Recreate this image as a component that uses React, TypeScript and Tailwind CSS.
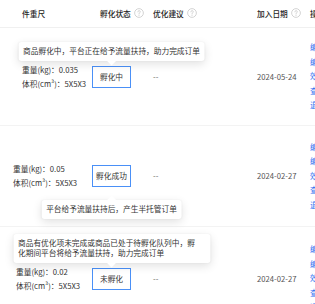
import React from 'react';

interface ProductRow {
  weight: string;
  volume: string;
  status: string;
  date: string;
  indent: string;
  height: string;
  tip: string;
  tipSide: 'top' | 'bottom';
  tipClass: string;
}

const rows: ProductRow[] = [
  {
    weight: '0.035',
    volume: '5X5X3',
    status: '孵化中',
    date: '2024-05-24',
    indent: 'pl-[22px]',
    height: 'h-[98px]',
    tip: '商品孵化中，平台正在给予流量扶持，助力完成订单',
    tipSide: 'top',
    tipClass: 'whitespace-nowrap',
  },
  {
    weight: '0.05',
    volume: '5X5X3',
    status: '孵化成功',
    date: '2024-02-27',
    indent: 'pl-[13px]',
    height: 'h-[101px]',
    tip: '平台给予流量扶持后，产生半托管订单',
    tipSide: 'bottom',
    tipClass: 'whitespace-nowrap',
  },
  {
    weight: '0.02',
    volume: '5X5X3',
    status: '未孵化',
    date: '2024-02-27',
    indent: 'pl-[16px]',
    height: 'h-[104px]',
    tip: '商品有优化项未完成或商品已处于待孵化队列中，孵化期间平台将给予流量扶持，助力完成订单',
    tipSide: 'top',
    tipClass: 'w-[197px] pr-[14px]',
  },
];

const actions = ['编辑商品', '编辑价格', '效果数据', '查看详情', '退出孵化'];

const HelpIcon = () => (
  <svg width="10" height="10" viewBox="0 0 16 16" className="ml-[3px] shrink-0">
    <circle cx="8" cy="8" r="7" fill="none" stroke="#c4c4c4" strokeWidth="1.2" />
    <path d="M6.2 6.2a1.9 1.9 0 1 1 2.6 1.7c-.5.3-.8.6-.8 1.2v.4" fill="none" stroke="#c4c4c4" strokeWidth="1.2" strokeLinecap="round" />
    <circle cx="8" cy="11.6" r="0.8" fill="#c4c4c4" />
  </svg>
);

const StatusTip: React.FC<{ row: ProductRow }> = ({ row }) => {
  const top = row.tipSide === 'top';
  return (
    <div
      className={`absolute left-1/2 -translate-x-1/2 z-10 ${top ? 'bottom-[calc(100%+6px)]' : 'top-[calc(100%+14px)]'}`}
    >
      <div
        className={`relative bg-white rounded-[3px] pl-[5px] pr-[5px] py-[4px] text-[7.7px] leading-[10.5px] text-[#333] shadow-[0_3px_10px_rgba(0,0,0,0.12),0_0_2px_rgba(0,0,0,0.06)] ${row.tipClass}`}
      >
        {row.tip}
        <span
          className={`absolute left-1/2 -translate-x-1/2 w-[7px] h-[7px] bg-white rotate-45 ${top ? '-bottom-[3px]' : '-top-[3px]'}`}
        />
      </div>
    </div>
  );
};

export default function App() {
  return (
    <div
      className="w-[315px] h-[304px] overflow-hidden bg-white text-[#333]"
      style={{ fontFamily: '"Noto Sans CJK SC", "Noto Sans", sans-serif' }}
    >
      <div className="w-[400px]">
        {/* header */}
        <div className="grid grid-cols-[88px_60px_105px_52px_95px] h-[28px] items-center border-b border-[#f0f0f0] text-[7.7px] font-medium text-[#262626]">
          <div className="pl-[22px]">件重尺</div>
          <div className="pl-[12px] flex items-center whitespace-nowrap">
            孵化状态
            <HelpIcon />
          </div>
          <div className="pl-[5px] flex items-center whitespace-nowrap">
            优化建议
            <HelpIcon />
          </div>
          <div className="pl-[4px] flex items-center whitespace-nowrap">
            加入日期
            <HelpIcon />
          </div>
          <div className="pl-[5px]">操作</div>
        </div>

        {rows.map((row, i) => (
          <div
            key={i}
            className={`grid grid-cols-[88px_60px_105px_52px_95px] items-center border-b border-[#f3f3f3] text-[7.7px] ${row.height}`}
          >
            <div className={`${row.indent} leading-[14px] whitespace-nowrap`}>
              <div>重量(kg)：{row.weight}</div>
              <div>体积(cm³)：{row.volume}</div>
            </div>
            <div className="pl-[4px]">
              <div className="relative w-[39px] h-[22px] flex items-center justify-center border-[1.5px] border-[#4a90f7] bg-white">
                {row.status}
                <StatusTip row={row} />
              </div>
            </div>
            <div className="pl-[5px] text-[#666]">--</div>
            <div className="pl-[4px] text-[#555] whitespace-nowrap">{row.date}</div>
            <div className="pl-[5px] flex flex-col leading-[14.5px] text-[#2f6ff0]">
              {actions.map((a) => (
                <span key={a} className="whitespace-nowrap">{a}</span>
              ))}
            </div>
          </div>
        ))}
      </div>
    </div>
  );
}
